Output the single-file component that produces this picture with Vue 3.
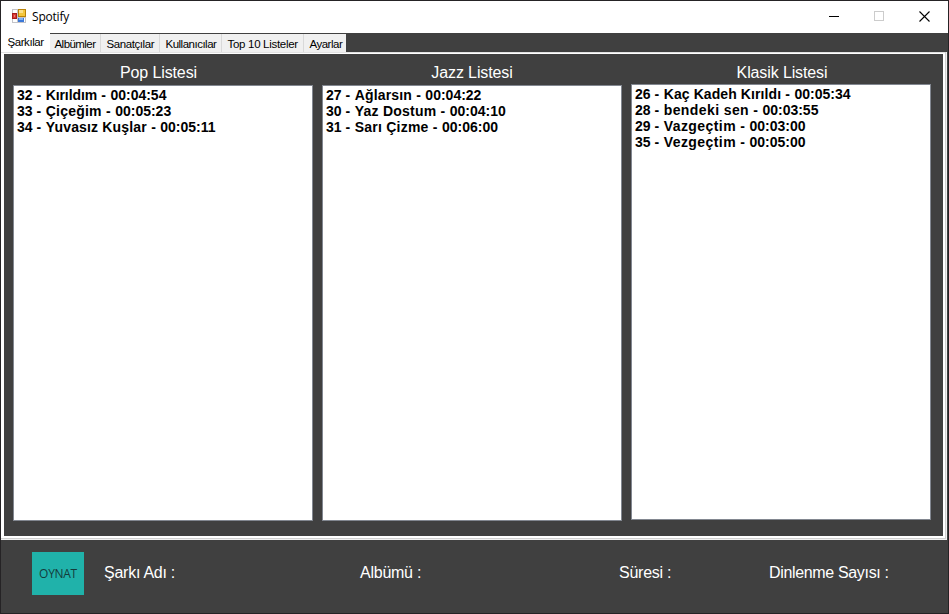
<script setup>
const tabs = [
  { label: 'Albümler', cls: 'albums' },
  { label: 'Sanatçılar', cls: 'artists' },
  { label: 'Kullanıcılar', cls: 'users' },
  { label: 'Top 10 Listeler', cls: 'top' },
  { label: 'Ayarlar', cls: 'settings' },
]
const lists = [
  {
    title: 'Pop Listesi', cls: 'pop', songs: [
      { id: 32, name: 'Kırıldım', time: '00:04:54' },
      { id: 33, name: 'Çiçeğim', time: '00:05:23' },
      { id: 34, name: 'Yuvasız Kuşlar', time: '00:05:11' },
    ],
  },
  {
    title: 'Jazz Listesi', cls: 'jazz', songs: [
      { id: 27, name: 'Ağlarsın', time: '00:04:22' },
      { id: 30, name: 'Yaz Dostum', time: '00:04:10' },
      { id: 31, name: 'Sarı Çizme', time: '00:06:00' },
    ],
  },
  {
    title: 'Klasik Listesi', cls: 'classic', songs: [
      { id: 26, name: 'Kaç Kadeh Kırıldı', time: '00:05:34' },
      { id: 28, name: 'bendeki sen', time: '00:03:55' },
      { id: 29, name: 'Vazgeçtim', time: '00:03:00' },
      { id: 35, name: 'Vezgeçtim', time: '00:05:00' },
    ],
  },
]
</script>

<template>
  <div class="window">
    <header class="titlebar">
      <svg class="app-icon" width="14" height="14" viewBox="0 0 14 14" shape-rendering="crispEdges">
        <rect width="14" height="14" fill="#c4c4c8" />
        <rect x="1" y="1" width="4" height="3" fill="#fff" />
        <rect x="1" y="10" width="4" height="3" fill="#fff" />
        <rect x="0" y="4" width="5" height="6" fill="#a81c1c" />
        <rect x="1" y="5" width="3" height="4" fill="#d83b35" />
        <rect x="2" y="6" width="1" height="2" fill="#f08070" />
        <rect x="6" y="0" width="8" height="8" fill="#b98208" />
        <rect x="7" y="1" width="6" height="6" fill="#f4c63c" />
        <rect x="7" y="1" width="4" height="3" fill="#fbe08a" />
        <rect x="6" y="9" width="6" height="4" fill="#3b78d8" />
        <rect x="7" y="9" width="4" height="2" fill="#82b4f5" />
        <rect x="12" y="9" width="1" height="4" fill="#fff" />
      </svg>
      <span class="title">Spotify</span>
      <div class="controls">
        <svg width="10" height="10" viewBox="0 0 10 10"><path d="M0 5.5H10" stroke="#000" /></svg>
        <svg width="10" height="10" viewBox="0 0 10 10"><rect x=".5" y=".5" width="9" height="9" fill="none" stroke="#ccc" /></svg>
        <svg width="11" height="11" viewBox="0 0 11 11"><path d="M.5 .5L10.5 10.5M10.5 .5L.5 10.5" stroke="#000" stroke-width="1.1" /></svg>
      </div>
    </header>
    <nav class="tabs">
      <div class="tab active">Şarkılar</div>
      <div v-for="t in tabs" :key="t.label" class="tab" :class="t.cls">{{ t.label }}</div>
    </nav>
    <main class="frame">
      <div class="page">
        <section v-for="l in lists" :key="l.title" class="column" :class="l.cls">
          <h2>{{ l.title }}</h2>
          <ul>
            <li v-for="s in l.songs" :key="s.id"><span class="id">{{ s.id }}</span><span class="dash">&nbsp;-&nbsp;</span><span class="name">{{ s.name }}</span><span class="dash">&nbsp;-&nbsp;</span><span class="time">{{ s.time }}</span></li>
          </ul>
        </section>
      </div>
    </main>
    <footer class="player">
      <button>OYNAT</button>
      <span class="info song">Şarkı Adı :</span>
      <span class="info album">Albümü :</span>
      <span class="info duration">Süresi :</span>
      <span class="info plays">Dinlenme Sayısı :</span>
    </footer>
  </div>
</template>

<style>
body { background: #252325; overflow: hidden; }
</style>

<style scoped>
* { box-sizing: border-box; }
.window {
  width: 949px; height: 614px;
  border: 1px solid #252325;
  background: #404040;
  display: flex; flex-direction: column;
  font-family: "Liberation Sans", Arial, sans-serif;
  white-space: nowrap;
}
.titlebar { height: 32px; flex: none; background: #fff; display: flex; align-items: flex-start; padding: 8px 18px 0 11px; }
.title { margin-left: 6px; font: 12px/16px "Open Sans", "Noto Sans", sans-serif; letter-spacing: -0.2px; color: #000; }
.controls { margin-left: auto; display: flex; gap: 35px; padding-top: 2px; }
.tabs { height: 19px; flex: none; display: flex; align-items: flex-start; }
.tab {
  height: 18px; margin-top: 1px; padding-left: 5.5px; border-right: 1px solid #d9d9d9; background: #f0f0f0;
  color: #000; font-size: 11.5px; line-height: 20px; letter-spacing: -0.43px;
}
.tab.active { width: 49px; height: 20px; margin-top: -1px; padding-left: 6.5px; background: #fff; border-right-color: #fff; }
.albums { width: 51px; padding-left: 4.5px; letter-spacing: -0.55px; }
.artists { width: 59px; letter-spacing: -0.42px; }
.users { width: 62px; letter-spacing: -0.5px; }
.top { width: 82px; letter-spacing: -0.3px; }
.settings { width: 42px; letter-spacing: -0.5px; border-right-color: #f0f0f0; }
.frame { height: 488px; width: 946px; flex: none; background: #fff; padding: 2px 4px 4px 3px; box-shadow: inset -1px -1px #f0f0f0, inset -2px -2px #d0d0d0, inset 0 1px #e2e2e2; }
.page { width: 939px; height: 482px; background: #404040; display: flex; gap: 9px; padding-left: 9px; }
.column { width: 300px; padding-top: 9px; }
h2 { margin: 0; height: 22px; font-size: 16px; line-height: 20px; font-weight: 400; color: #fff; text-align: center; padding-right: 9px; letter-spacing: -0.12px; }
.jazz h2 { padding-right: 0; }
.classic h2 { height: 21px; padding: 0 0 0 2px; }
ul { list-style: none; margin: 0; padding: 1px 3px; height: 436px; border: 1px solid #828790; background: #fff; }
li { height: 16px; font-size: 14px; line-height: 16px; font-weight: 700; color: #000; }
.id { letter-spacing: -0.1px; }
.dash { letter-spacing: 0.3px; }
.name { letter-spacing: 0.23px; }
.time { letter-spacing: 0; }
.pop li:nth-child(1) .name { letter-spacing: -0.1px; }
.pop li:nth-child(3) .name { letter-spacing: 0.17px; }
.jazz li:nth-child(1) .name { letter-spacing: 0.16px; }
.classic li:nth-child(1) .name { letter-spacing: 0.09px; }
.classic li:nth-child(2) .name { letter-spacing: 0.4px; }
.classic li:nth-child(n + 3) .name { letter-spacing: 0.43px; }
.player { flex: 1; display: flex; padding: 12px 0 0 31px; }
button { width: 52px; height: 43px; border: 0; padding: 0; background: #20b2aa; color: #143c3c; font: 12px "Open Sans", sans-serif; letter-spacing: -0.3px; }
.info { font-size: 16px; line-height: 41px; color: #fff; letter-spacing: -0.25px; }
.song { margin-left: 20px; width: 256px; }
.album { width: 259px; }
.duration { width: 150px; }
.plays { letter-spacing: -0.34px; }
</style>
